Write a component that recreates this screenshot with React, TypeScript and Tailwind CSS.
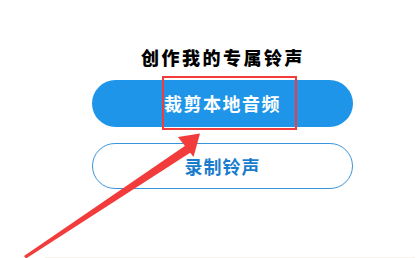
import React from 'react';

const font = { fontFamily: '"Noto Sans CJK SC", "Noto Sans", sans-serif' };

export default function App() {
  return (
    <div className="relative w-[418px] h-[258px] bg-white overflow-hidden" style={font}>
      <div className="ml-[92px] w-[261px] pt-[44px] flex flex-col items-center">
        <h1 className="text-[18px] leading-[26px] font-black text-black tracking-[2.5px] ml-[1px]">
          创作我的专属铃声
        </h1>
        <button className="mt-[10px] w-full h-[47px] rounded-full bg-[#1e95e8] text-white text-[18px] font-bold tracking-[1.5px]">
          裁剪本地音频
        </button>
        <button className="mt-[16px] w-full h-[46px] rounded-full border border-[#3a94dc] bg-white text-[#1a7ccc] text-[18px] font-bold tracking-[1px]">
          录制铃声
        </button>
      </div>

      {/* highlight box */}
      <div className="absolute left-[162px] top-[76px] w-[135px] h-[54px] border-[2.5px] border-[#f23b3b]" />

      {/* arrow */}
      <svg className="absolute left-0 top-0" width="418" height="258" viewBox="0 0 418 258">
        <polygon points="24,256 185.5,145.5 190.5,152.5 26,258.5" fill="#f23b3b" />
        <polygon points="200,133.5 178,137 193.5,157" fill="#f23b3b" />
      </svg>

      <div className="absolute left-[45px] bottom-0 w-[370px] h-px bg-[#f6f4ea]" />
    </div>
  );
}
